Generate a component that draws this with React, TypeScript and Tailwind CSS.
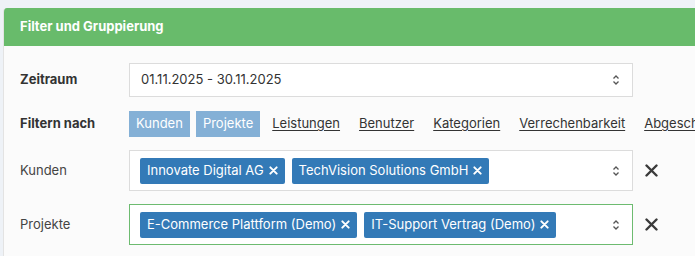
import React from "react";

const font = { fontFamily: "Inter, 'Noto Sans', sans-serif" };

function TagX() {
  return (
    <svg width="9" height="9" viewBox="0 0 10 10" className="ml-[5px] shrink-0">
      <path d="M1.5 1.5 L8.5 8.5 M8.5 1.5 L1.5 8.5" stroke="white" strokeWidth="2.2" strokeLinecap="round" />
    </svg>
  );
}

function Chevrons() {
  return (
    <svg width="8" height="12" viewBox="0 0 8 12" className="shrink-0">
      <path d="M1.5 4.5 L4 2 L6.5 4.5 M1.5 7.5 L4 10 L6.5 7.5" fill="none" stroke="#555" strokeWidth="1.3" />
    </svg>
  );
}

function ClearX() {
  return (
    <svg width="13" height="13" viewBox="0 0 13 13">
      <path d="M1.5 1.5 L11.5 11.5 M11.5 1.5 L1.5 11.5" stroke="#3a3a3a" strokeWidth="2.4" strokeLinecap="round" />
    </svg>
  );
}

function Tag({ label }: { label: string }) {
  return (
    <span className="flex h-[26px] items-center rounded-[2px] bg-[#337ab7] pl-[7px] pr-[7px] text-[13px] text-white">
      {label}
      <TagX />
    </span>
  );
}

interface MultiRowProps {
  label: string;
  tags: string[];
  active?: boolean;
}

function MultiRow({ label, tags, active }: MultiRowProps) {
  return (
    <div className="flex items-center">
      <div className="w-[109px] shrink-0 text-[13px] text-[#444]">{label}</div>
      <div
        className={`flex h-[41px] w-[504px] items-center justify-between border bg-white pl-[10px] pr-[12px] ${
          active ? "border-[#6dbb70]" : "border-[#dcdcdc]"
        }`}
      >
        <div className="flex items-center gap-[7px]">
          {tags.map((t) => (
            <Tag key={t} label={t} />
          ))}
        </div>
        <Chevrons />
      </div>
      <button className="ml-[11px] flex h-[26px] w-[14px] items-center justify-center">
        <ClearX />
      </button>
    </div>
  );
}

const filterLinks = ["Leistungen", "Benutzer", "Kategorien", "Verrechenbarkeit", "Abgeschlossen"];

export default function App() {
  return (
    <div className="h-[256px] overflow-hidden bg-[#eef2f7] pl-[3px] pt-[8px]" style={font}>
      <div className="w-[760px] overflow-hidden rounded-tl-[4px] border-l border-[#e3e3e3]">
        <div className="flex h-[38px] items-center bg-[#68bb6b] px-[16px] text-[13px] font-bold text-white">
          Filter und Gruppierung
        </div>
        <div className="flex flex-col bg-[#fbfbfb] px-[16px] pb-[20px] pt-[17px]">
          <div className="flex items-center">
            <div className="w-[109px] shrink-0 text-[13px] font-bold text-[#333]">Zeitraum</div>
            <div className="flex h-[34px] w-[504px] items-center justify-between border border-[#dcdcdc] bg-white pl-[11px] pr-[12px] text-[13px] text-[#333]">
              01.11.2025 - 30.11.2025
              <Chevrons />
            </div>
          </div>

          <div className="mt-[14px] flex items-center">
            <div className="w-[109px] shrink-0 text-[13px] font-bold text-[#333]">Filtern nach</div>
            <div className="flex items-center whitespace-nowrap">
              <span className="flex h-[26px] items-center bg-[#84b0d6] px-[7px] text-[13px] text-white">Kunden</span>
              <span className="ml-[6px] flex h-[26px] items-center bg-[#84b0d6] px-[7px] text-[13px] text-white">
                Projekte
              </span>
              {filterLinks.map((l, i) => (
                <a
                  key={l}
                  href="#"
                  className={`text-[13px] text-[#333] underline underline-offset-2 ${i === 0 ? "ml-[12px]" : "ml-[19px]"}`}
                >
                  {l}
                </a>
              ))}
            </div>
          </div>

          <div className="mt-[13px] flex flex-col gap-[13px]">
            <MultiRow label="Kunden" tags={["Innovate Digital AG", "TechVision Solutions GmbH"]} />
            <MultiRow label="Projekte" tags={["E-Commerce Plattform (Demo)", "IT-Support Vertrag (Demo)"]} active />
          </div>
        </div>
      </div>
    </div>
  );
}
